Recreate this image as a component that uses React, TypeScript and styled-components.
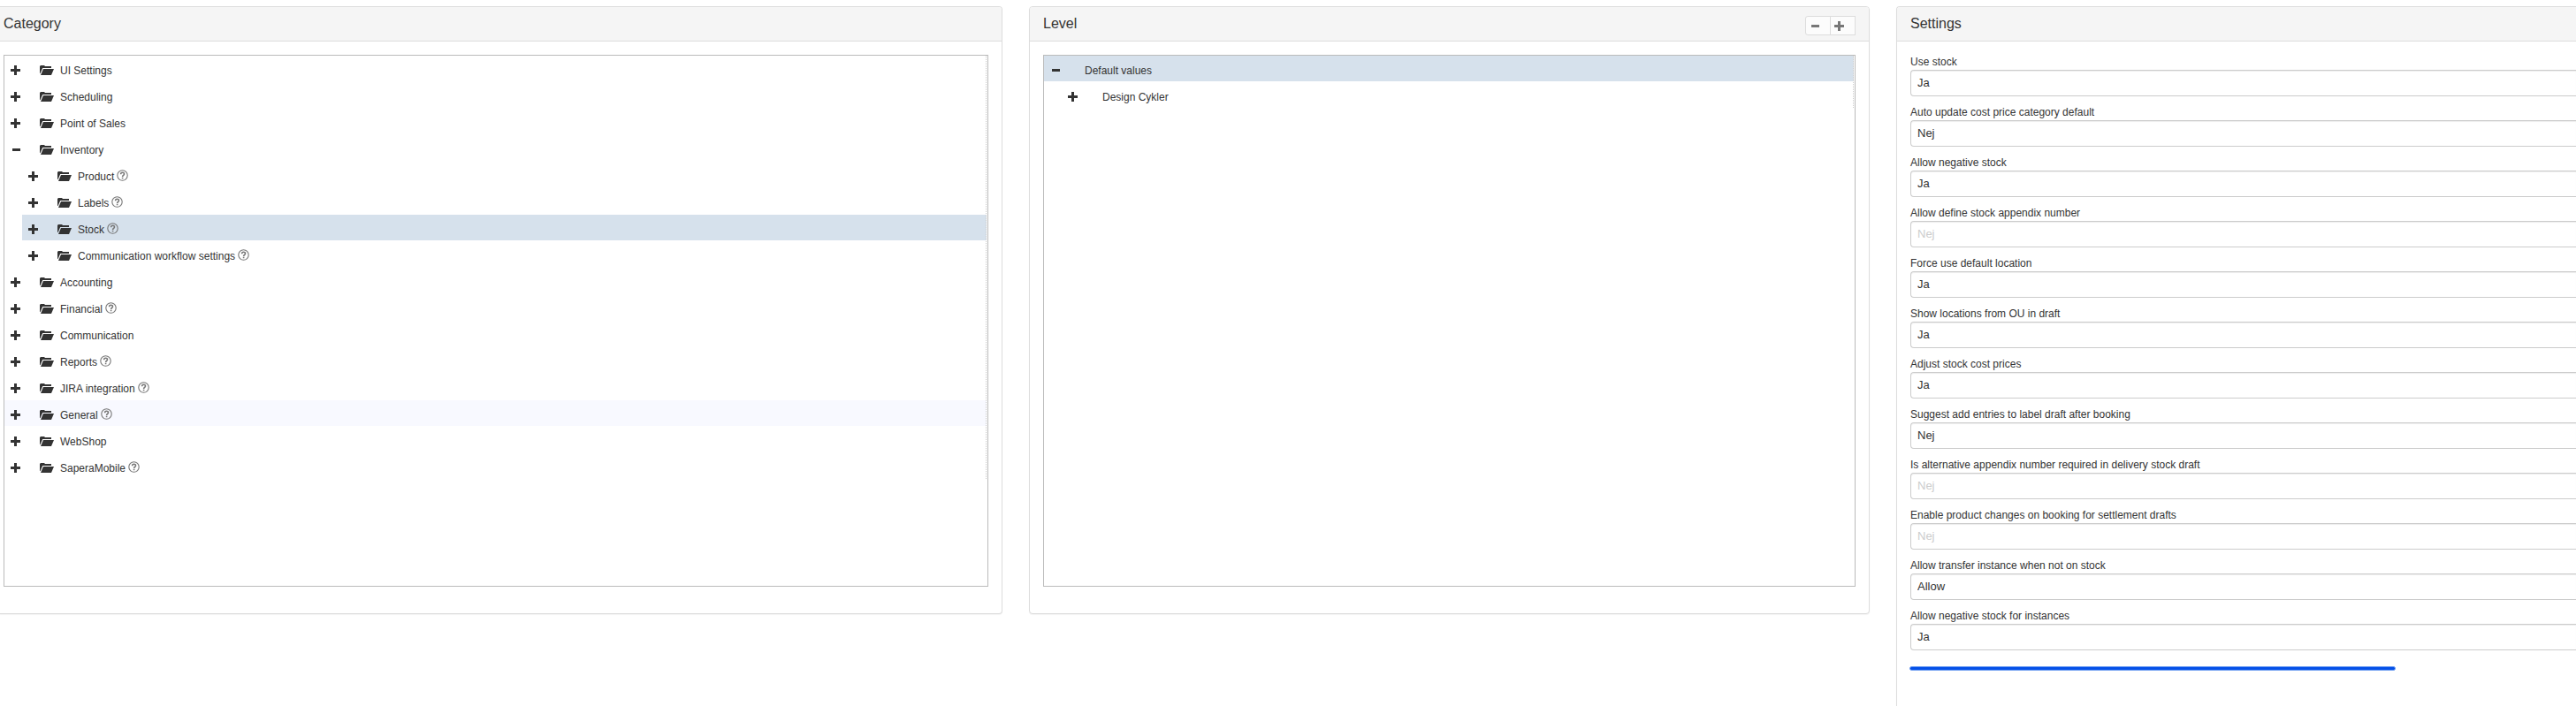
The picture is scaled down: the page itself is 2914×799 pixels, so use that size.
import React, { useState } from "react";
import styled, { createGlobalStyle, css } from "styled-components";

const GlobalStyle = createGlobalStyle`
  *, *::before, *::after { box-sizing: border-box; }
  body {
    margin: 0;
    background: #fff;
    color: #333;
    font: 12px/20px "Liberation Sans", Arial, sans-serif;
  }
  button, select { font-family: inherit; color: inherit; }
`;

type Edge = "left" | "right" | "none";

const Page = styled.main`
  display: grid;
  grid-template-columns: minmax(0, 1134fr) minmax(0, 951fr) minmax(0, 769fr);
  gap: 30px;
  align-items: start;
  height: 100vh;
  padding-top: 7px;
  overflow: hidden;
`;

const Panel = styled.section<{ $cut?: Edge }>`
  border: 1px solid #ddd;
  border-radius: 4px;
  background: #fff;
  box-shadow: 0 1px 1px rgba(0, 0, 0, 0.05);
  overflow: hidden;
  ${({ $cut }) =>
    $cut === "left" &&
    css`
      border-left: 0;
      border-radius: 0 4px 4px 0;
    `}
  ${({ $cut }) =>
    $cut === "right" &&
    css`
      align-self: stretch;
      border-right: 0;
      border-bottom: 0;
      border-radius: 4px 0 0 0;
    `}
`;

const PanelHeader = styled.header<{ $cut?: Edge }>`
  display: flex;
  align-items: center;
  justify-content: space-between;
  height: 39px;
  padding: 0 15px;
  padding-left: ${({ $cut }) => ($cut === "left" ? 4 : 15)}px;
  border-bottom: 1px solid #ddd;
  background: #f5f5f5;
`;

const PanelTitle = styled.h2`
  margin: 0;
  font-size: 16px;
  line-height: 20px;
  font-weight: 400;
`;

const PanelBody = styled.div<{ $cut?: Edge }>`
  padding: 15px 15px 30px;
  padding-left: ${({ $cut }) => ($cut === "left" ? 4 : 15)}px;
  padding-right: ${({ $cut }) => ($cut === "right" ? 0 : 15)}px;
`;

const TreeBox = styled.div`
  height: 602px;
  padding-right: 1px;
  border: 1px solid #bbb;
  overflow: auto;
`;

const TreeList = styled.ul<{ $nested?: boolean }>`
  margin: 0;
  padding: 0 0 0 ${({ $nested }) => ($nested ? 20 : 0)}px;
  list-style: none;
`;

const TreeRow = styled.div<{ $state?: "selected" | "hover" }>`
  display: flex;
  align-items: center;
  height: 29px;
  margin-bottom: 1px;
  padding-top: 4px;
  border-right: 1px dotted #ccc;
  background: ${({ $state }) =>
    $state === "selected" ? "#d6e1ec" : $state === "hover" ? "#f8f9ff" : "transparent"};
`;

const Toggle = styled.button`
  display: flex;
  align-items: center;
  width: 40px;
  height: 25px;
  padding: 0 0 0 7px;
  border: 0;
  background: none;
  cursor: pointer;
`;

const NodeLabel = styled.span<{ $folder?: boolean }>`
  display: flex;
  align-items: center;
  height: 25px;
  padding-left: ${({ $folder }) => ($folder ? 0 : 6)}px;
  white-space: nowrap;
`;

const FolderSvg = styled.svg`
  width: 16px;
  height: 13px;
  margin-right: 7px;
`;

const HelpSvg = styled.svg`
  width: 13px;
  height: 13px;
  margin: 0 0 2px 3px;
`;

const ButtonGroup = styled.div`
  display: flex;
  padding-top: 4px;
`;

const HeaderButton = styled.button`
  display: flex;
  align-items: center;
  width: 29px;
  height: 22px;
  padding: 0 0 0 4px;
  border: 1px solid #ddd;
  background: #fcfcfc;
  color: #777;
  cursor: pointer;
  &:first-child {
    border-radius: 3px 0 0 3px;
  }
  & + & {
    margin-left: -1px;
  }
`;

const Field = styled.div`
  display: flex;
  flex-direction: column;
  margin-bottom: 10px;
`;

const FieldLabel = styled.label`
  line-height: 17px;
`;

const FieldSelect = styled.select`
  appearance: none;
  width: 100%;
  height: 30px;
  padding: 0 7px;
  border: 1px solid #ccc;
  border-right: 0;
  border-radius: 4px 0 0 4px;
  background: #fff;
  box-shadow: inset 0 1px 1px rgba(0, 0, 0, 0.075);
  font-size: 13px;
  line-height: 20px;
  &:disabled {
    color: #ccc;
    opacity: 1;
  }
`;

const Marker = styled.hr`
  width: 73%;
  height: 5px;
  margin: 18px 0 0 -1px;
  border: 1px solid #6c9cf0;
  border-radius: 3px;
  background: #0450e8;
`;

const PlusIcon = () => (
  <svg width="12" height="11" viewBox="0 0 12 11" aria-hidden="true">
    <path d="M4 0h3v4h4v3H7v4H4V7H0V4h4z" fill="currentColor" />
  </svg>
);

const MinusIcon = () => (
  <svg width="12" height="11" viewBox="0 0 12 11" aria-hidden="true">
    <path d="M2 4h9v3H2z" fill="currentColor" />
  </svg>
);

const FolderIcon = () => (
  <FolderSvg viewBox="0 0 16 13" aria-hidden="true">
    <path d="M0 10V2L1 1h4l1 1h7v2H3.200L.6 10z" fill="#333" />
    <path d="M4 5h12l-3 7H1z" fill="#333" />
  </FolderSvg>
);

const HelpIcon = () => (
  <HelpSvg viewBox="0 0 13 13" fill="none" role="img" aria-label="Help">
    <circle cx="6.500" cy="6.500" r="5.700" stroke="#777" strokeWidth="1.100" />
    <path
      d="M4.600 5.200c0-2.500 3.900-2.500 3.900-.2 0 1.300-1.900 1.300-1.900 2.900M6.600 8.700v1.500"
      stroke="#777"
      strokeWidth="1.600"
    />
  </HelpSvg>
);

interface TreeNode {
  name: string;
  help?: boolean;
  state?: "selected" | "hover";
  children?: TreeNode[];
}

const categories: TreeNode[] = [
  { name: "UI Settings" },
  { name: "Scheduling" },
  { name: "Point of Sales" },
  {
    name: "Inventory",
    children: [
      { name: "Product", help: true },
      { name: "Labels", help: true },
      { name: "Stock", help: true, state: "selected" },
      { name: "Communication workflow settings", help: true },
    ],
  },
  { name: "Accounting" },
  { name: "Financial", help: true },
  { name: "Communication" },
  { name: "Reports", help: true },
  { name: "JIRA integration", help: true },
  { name: "General", help: true, state: "hover" },
  { name: "WebShop" },
  { name: "SaperaMobile", help: true },
];

const levels: TreeNode[] = [
  { name: "Default values", state: "selected", children: [{ name: "Design Cykler" }] },
];

const settings = [
  { id: "use-stock", label: "Use stock", value: "Ja" },
  { id: "auto-cost", label: "Auto update cost price category default", value: "Nej" },
  { id: "negative-stock", label: "Allow negative stock", value: "Ja" },
  { id: "appendix", label: "Allow define stock appendix number", value: "Nej", disabled: true },
  { id: "force-location", label: "Force use default location", value: "Ja" },
  { id: "ou-locations", label: "Show locations from OU in draft", value: "Ja" },
  { id: "adjust-cost", label: "Adjust stock cost prices", value: "Ja" },
  { id: "suggest-labels", label: "Suggest add entries to label draft after booking", value: "Nej" },
  { id: "alt-appendix", label: "Is alternative appendix number required in delivery stock draft", value: "Nej", disabled: true },
  { id: "product-changes", label: "Enable product changes on booking for settlement drafts", value: "Nej", disabled: true },
  { id: "transfer", label: "Allow transfer instance when not on stock", value: "Allow" },
  { id: "negative-instances", label: "Allow negative stock for instances", value: "Ja" },
];

function TreeItem({ node, folder }: { node: TreeNode; folder?: boolean }) {
  const [open, setOpen] = useState(Boolean(node.children));
  return (
    <li>
      <TreeRow $state={node.state}>
        <Toggle
          type="button"
          aria-expanded={open}
          aria-label={`Toggle ${node.name}`}
          onClick={() => setOpen(!open)}
        >
          {open ? <MinusIcon /> : <PlusIcon />}
        </Toggle>
        <NodeLabel $folder={folder}>
          {folder && <FolderIcon />}
          {node.name}
          {node.help && <HelpIcon />}
        </NodeLabel>
      </TreeRow>
      {open && node.children && <Tree nodes={node.children} folder={folder} nested />}
    </li>
  );
}

function Tree({ nodes, folder, nested }: { nodes: TreeNode[]; folder?: boolean; nested?: boolean }) {
  return (
    <TreeList $nested={nested}>
      {nodes.map((node) => (
        <TreeItem key={node.name} node={node} folder={folder} />
      ))}
    </TreeList>
  );
}

export default function App() {
  return (
    <>
      <GlobalStyle />
      <Page>
        <Panel $cut="left">
          <PanelHeader $cut="left">
            <PanelTitle>Category</PanelTitle>
          </PanelHeader>
          <PanelBody $cut="left">
            <TreeBox>
              <Tree nodes={categories} folder />
            </TreeBox>
          </PanelBody>
        </Panel>

        <Panel>
          <PanelHeader>
            <PanelTitle>Level</PanelTitle>
            <ButtonGroup>
              <HeaderButton type="button" aria-label="Collapse all">
                <MinusIcon />
              </HeaderButton>
              <HeaderButton type="button" aria-label="Expand all">
                <PlusIcon />
              </HeaderButton>
            </ButtonGroup>
          </PanelHeader>
          <PanelBody>
            <TreeBox>
              <Tree nodes={levels} />
            </TreeBox>
          </PanelBody>
        </Panel>

        <Panel $cut="right">
          <PanelHeader>
            <PanelTitle>Settings</PanelTitle>
          </PanelHeader>
          <PanelBody $cut="right">
            {settings.map(({ id, label, value, disabled }) => (
              <Field key={id}>
                <FieldLabel htmlFor={id}>{label}</FieldLabel>
                <FieldSelect id={id} defaultValue={value} disabled={disabled}>
                  <option>{value}</option>
                </FieldSelect>
              </Field>
            ))}
            <Marker />
          </PanelBody>
        </Panel>
      </Page>
    </>
  );
}
